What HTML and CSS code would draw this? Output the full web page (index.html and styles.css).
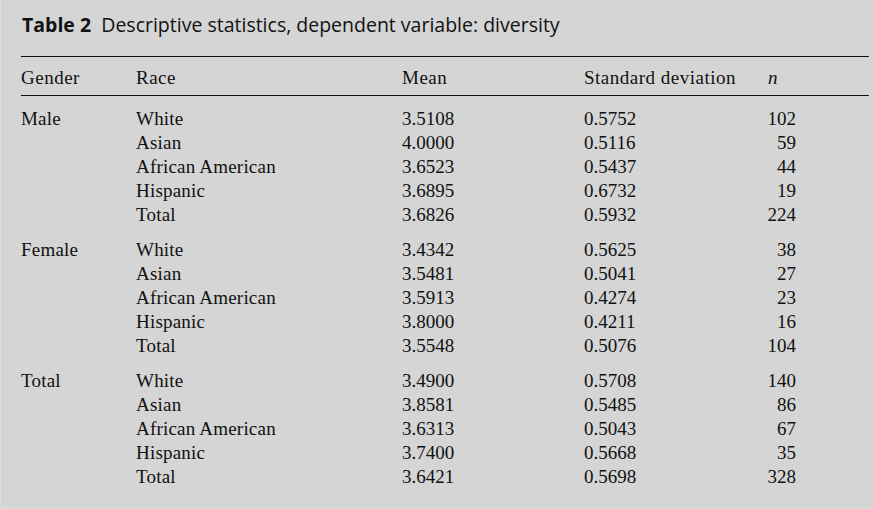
FILE: index.html
```html
<!DOCTYPE html>
<html lang="en">
<head>
<meta charset="utf-8">
<title>Table 2 Descriptive statistics</title>
<link rel="stylesheet" href="styles.css">
</head>
<body>
<div class="page">
  <h1 class="caption"><span class="label">Table 2</span>&nbsp; Descriptive statistics, dependent variable: diversity</h1>
  <table class="stats">
    <colgroup>
      <col class="c-gender">
      <col class="c-race">
      <col class="c-mean">
      <col class="c-sd">
      <col class="c-n">
      <col class="c-rest">
    </colgroup>
    <thead>
      <tr>
        <th>Gender</th><th>Race</th><th>Mean</th><th>Standard deviation</th><th class="n-head"><i>n</i></th><th></th>
      </tr>
    </thead>
    <tbody>
      <tr class="first"><td>Male</td><td>White</td><td>3.5108</td><td>0.5752</td><td class="num">102</td><td></td></tr>
      <tr><td></td><td>Asian</td><td>4.0000</td><td>0.5116</td><td class="num">59</td><td></td></tr>
      <tr><td></td><td>African American</td><td>3.6523</td><td>0.5437</td><td class="num">44</td><td></td></tr>
      <tr><td></td><td>Hispanic</td><td>3.6895</td><td>0.6732</td><td class="num">19</td><td></td></tr>
      <tr><td></td><td>Total</td><td>3.6826</td><td>0.5932</td><td class="num">224</td><td></td></tr>
    </tbody>
    <tbody>
      <tr class="first"><td>Female</td><td>White</td><td>3.4342</td><td>0.5625</td><td class="num">38</td><td></td></tr>
      <tr><td></td><td>Asian</td><td>3.5481</td><td>0.5041</td><td class="num">27</td><td></td></tr>
      <tr><td></td><td>African American</td><td>3.5913</td><td>0.4274</td><td class="num">23</td><td></td></tr>
      <tr><td></td><td>Hispanic</td><td>3.8000</td><td>0.4211</td><td class="num">16</td><td></td></tr>
      <tr><td></td><td>Total</td><td>3.5548</td><td>0.5076</td><td class="num">104</td><td></td></tr>
    </tbody>
    <tbody>
      <tr class="first"><td>Total</td><td>White</td><td>3.4900</td><td>0.5708</td><td class="num">140</td><td></td></tr>
      <tr><td></td><td>Asian</td><td>3.8581</td><td>0.5485</td><td class="num">86</td><td></td></tr>
      <tr><td></td><td>African American</td><td>3.6313</td><td>0.5043</td><td class="num">67</td><td></td></tr>
      <tr><td></td><td>Hispanic</td><td>3.7400</td><td>0.5668</td><td class="num">35</td><td></td></tr>
      <tr><td></td><td>Total</td><td>3.6421</td><td>0.5698</td><td class="num">328</td><td></td></tr>
    </tbody>
  </table>
</div>
</body>
</html>
```

FILE: styles.css
```css
html, body {
  margin: 0;
  padding: 0;
  background: #d5d5d5;
}

.page {
  box-sizing: border-box;
  height: 509px;
  padding: 13px 5px 0 20px;
  border-left: 1px solid #dedede;
  border-bottom: 1px solid #dedede;
  color: #111;
}

.caption {
  margin: 0 0 19px 0;
  padding-left: 1px;
  font-family: "Open Sans", "Noto Sans", sans-serif;
  font-size: 19.5px;
  line-height: 24px;
  font-weight: 400;
  color: #111;
  white-space: nowrap;
}

.caption .label {
  font-weight: 700;
}

.stats {
  width: 848px;
  table-layout: fixed;
  border-collapse: collapse;
  border-spacing: 0;
  font-family: "Liberation Serif", "Times New Roman", serif;
  font-size: 19px;
  line-height: 24px;
  color: #111;
}

.c-gender { width: 114px; }
.c-race { width: 266px; }
.c-mean { width: 182px; }
.c-sd { width: 183px; }
.c-n { width: 31px; }
.c-rest { width: 72px; }

.stats th,
.stats td {
  padding: 0 0 0 1px;
  text-align: left;
  font-weight: 400;
  white-space: nowrap;
  vertical-align: top;
}

.stats th:nth-child(-n+4) {
  letter-spacing: 0.5px;
}

.stats td:nth-child(-n+2) {
  letter-spacing: 0.2px;
}

.stats th:first-child,
.stats td:first-child {
  padding-left: 0;
}

.stats thead th {
  border-top: 1px solid #111;
  border-bottom: 1px solid #111;
  padding-top: 9px;
  padding-bottom: 5px;
}

.stats thead th.n-head {
  padding-left: 2px;
}

.stats td.num {
  text-align: right;
  padding-left: 0;
  padding-right: 1px;
}

.stats tr.first td {
  padding-top: 11px;
}
```
